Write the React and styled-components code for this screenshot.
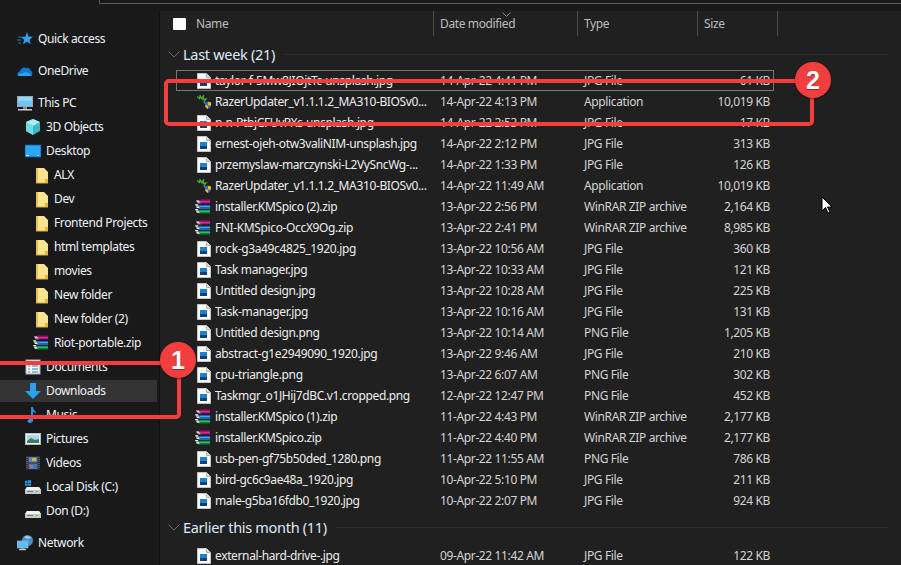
import styled, { createGlobalStyle } from "styled-components";

const GlobalStyle = createGlobalStyle`
  html, body {
    margin: 0;
    padding: 0;
    background: #191919;
  }
  * {
    box-sizing: border-box;
  }
`;

const Window = styled.div`
  position: relative;
  width: 901px;
  height: 565px;
  overflow: hidden;
  display: flex;
  flex-direction: column;
  background: #191919;
  color: #e8e8e8;
  font-family: "Noto Sans", "Liberation Sans", sans-serif;
  font-size: 12px;
  letter-spacing: -0.37px;
`;

const TopBar = styled.div`
  flex: 0 0 11px;
  padding-left: 99px;
`;

const AddressBox = styled.div`
  height: 4px;
  border-bottom: 1px solid #5a5a5a;
  border-left: 1px solid #5a5a5a;
`;

const Body = styled.div`
  flex: 1;
  display: flex;
  min-height: 0;
`;

const Sidebar = styled.nav`
  flex: 0 0 160px;
  padding-top: 16px;
  display: flex;
  flex-direction: column;
  gap: 8px;
  border-right: 1px solid #111;
`;

const NavGroup = styled.div`
  display: flex;
  flex-direction: column;
`;

const NavRow = styled.div`
  height: 22px;
  margin: 1px 0;
  width: 157px;
  display: flex;
  align-items: center;
  gap: 5px;
  padding-left: ${(p) => 17 + p.$level * 8}px;
  background: ${(p) => (p.$active ? "#333333" : "transparent")};
  white-space: nowrap;
  color: #eef3f8;
`;

const NavLabel = styled.span`
  margin-bottom: 2px;
`;

const Main = styled.main`
  flex: 1;
  background: #202020;
  min-width: 0;
`;

const HeaderBar = styled.div`
  position: relative;
  height: 25px;
  display: flex;
  padding-left: 13px;
  color: #bdbdbd;
`;

const Checkbox = styled.span`
  flex: 0 0 13px;
  height: 12px;
  margin: 7px 10px 0 0;
  background: #fff;
  border-radius: 1px;
`;

const HeaderCell = styled.div`
  width: ${(p) => p.$width}px;
  padding-top: 4px;
  padding-left: ${(p) => p.$pad || 0}px;
  border-right: 1px solid #4a4a4a;
`;

const SortChevron = styled.svg`
  position: absolute;
  left: 342px;
  top: 1px;
`;

const GroupTitle = styled.div`
  height: 22px;
  margin-top: ${(p) => p.$top}px;
  margin-bottom: ${(p) => 12 - p.$top}px;
  margin-left: 8px;
  display: flex;
  align-items: center;
  gap: 3px;
  font-size: 14.5px;
  letter-spacing: -0.3px;
  color: #dfeafa;
  white-space: nowrap;
`;

const GroupLine = styled.span`
  flex: 1;
  height: 1px;
  margin: 0 12px 0 6px;
  background: #2c2c2c;
`;

const FileRow = styled.div`
  width: 598px;
  height: 21px;
  margin-left: 16px;
  padding-left: 20px;
  display: grid;
  grid-template-columns: 18px 225px 144px 120px 66px;
  align-items: center;
  white-space: nowrap;
  border: 1px solid ${(p) => (p.$focused ? "#767676" : "transparent")};
  color: #d4d4d4;
`;

const IconCell = styled.span`
  display: flex;
  margin-left: ${(p) => p.$shift}px;
`;

const FileText = styled.span`
  margin-bottom: 1px;
`;

const FileName = styled(FileText)`
  color: #eeeeee;
`;

const FileSize = styled(FileText)`
  text-align: right;
`;

const Annotation = styled.div`
  position: absolute;
  left: ${(p) => p.$left}px;
  top: ${(p) => p.$top}px;
  width: ${(p) => p.$width}px;
  height: ${(p) => p.$height}px;
  border: 4px solid #f23e3e;
  border-radius: 5px;
`;

const Badge = styled.div`
  position: absolute;
  left: ${(p) => p.$left}px;
  top: ${(p) => p.$top}px;
  width: 36px;
  height: 36px;
  border-radius: 50%;
  background: #f23e3e;
  box-shadow: 0 1px 2px rgba(0, 0, 0, 0.45);
  color: #fff;
  display: flex;
  align-items: center;
  justify-content: center;
  font-family: "Liberation Sans", sans-serif;
  font-size: 25px;
  font-weight: 700;
  letter-spacing: 0;
  text-shadow: 0 1px 1px rgba(0, 0, 0, 0.4);
`;

const Pointer = styled.svg`
  position: absolute;
  left: 821px;
  top: 196px;
`;

const Icon = ({ w = 16, h = 16, vb = "0 0 16 16", children }) => (
  <svg width={w} height={h} viewBox={vb} style={{ flex: "none" }}>
    {children}
  </svg>
);

const StarIcon = () => (
  <Icon>
    <path d="M10 1l1.600 4.600 4.400.2-3.500 2.900 1.200 4.600L10 10.600l-4 2.700 1.200-4.600L4 6l4.500-.3z" fill="#2aa5f5" />
    <path d="M1 6h4M0 9h4M1 12h3" stroke="#1672c0" strokeWidth="1" />
  </Icon>
);

const CloudIcon = () => (
  <Icon>
    <path d="M1 13c-1.200-2-.3-4.400 2-4.800C4 5 7 3.500 9.500 5c2-.5 3.500.5 4 2.500 2 .5 2.500 4 1 5.500z" fill="#0f78d4" />
    <path d="M1 13c.5-2 3-3 5-2.500 2-2 6-1.500 8.500 2.500z" fill="#2ea1ec" />
  </Icon>
);

const MonitorIcon = () => (
  <Icon>
    <rect x="0.500" y="1.500" width="15" height="10" fill="#6cc4f8" stroke="#9aa8b4" />
    <rect x="1" y="2" width="14" height="4" fill="#8fd6fb" />
    <rect x="6" y="12" width="4" height="2" fill="#8a8f96" />
    <rect x="1" y="14" width="14" height="1.500" fill="#c8ccd0" />
  </Icon>
);

const CubeIcon = () => (
  <Icon>
    <path d="M8 0l7 3v9l-7 4-7-4V3z" fill="#3fb5c6" />
    <path d="M8 0l7 3-7 4-7-4z" fill="#a7eef2" />
    <path d="M1 3l7 4v9l-7-4z" fill="#6fdbe4" />
  </Icon>
);

const DesktopIcon = () => (
  <Icon>
    <rect x="0" y="2" width="16" height="12" fill="#1f9bf0" stroke="#0c66b4" strokeWidth="0.600" />
    <rect x="1" y="3" width="14" height="9" fill="#2aa8f6" />
    <rect x="1" y="12" width="3" height="1" fill="#d9eefc" />
    <rect x="12" y="12" width="2" height="1" fill="#d9eefc" />
  </Icon>
);

const FolderIcon = () => (
  <Icon h={17} vb="-2 0 16 17">
    <path d="M1 1h8l4 4v11H1z" fill="#fde48f" />
    <path d="M1 1h2v15H1z" fill="#edc04f" />
    <path d="M10 12h3v4h-3z" fill="#e5b53c" />
    <path d="M1 16h12" stroke="#dfae38" strokeWidth="1" />
  </Icon>
);

const ZipIcon = () => (
  <Icon w={16} h={16} vb="0 0 17 16">
    <path d="M2 1l4-1h10v4H5z" fill="#a00f6e" />
    <path d="M3 2h13v1H3z" fill="#ef3aa8" />
    <path d="M1 6h15v4H4z" fill="#1e63c4" />
    <path d="M3 7h13v1H3z" fill="#2fb5f0" />
    <path d="M1 11h15v4H4z" fill="#0f7a3a" />
    <path d="M3 12h13v1H3z" fill="#42d776" />
    <path d="M1 1h3L6 4H3zM0 5h3L5 9H2zM0 10h3l2 4H2z" fill="#f0f0f0" />
    <path d="M1 3h4M1 7h4M1 12h4" stroke="#222" strokeWidth="0.600" />
  </Icon>
);

const ImageFileIcon = () => (
  <Icon w={14} h={16} vb="0 0 14 16">
    <path d="M0.500 0.500h9l4 4v11h-13z" fill="#fbfbfb" stroke="#c4c4c4" />
    <path d="M9.500 0.500v4h4" fill="#d8d8d8" stroke="#b4b4b4" />
    <rect x="3" y="6" width="7" height="7" fill="#1f7fd1" />
    <rect x="3" y="10" width="7" height="3" fill="#123f7a" />
  </Icon>
);

const RazerIcon = () => (
  <Icon w={15} h={14} vb="0 0 15 14">
    <path d="M0 1.500l2.500 2L3 .5l1.500 3L6.500 1 6 4.500 9 4 7 6.500l1 2" fill="none" stroke="#45a83a" strokeWidth="1.300" />
    <path d="M8 7.500l2.800-1 3.200 1v3c0 1.500-1.500 2.500-3 3.500-1.500-1-3-2-3-3.500z" fill="#2a6fcf" />
    <path d="M11 6.700l3 .8v3h-3zM8 10.500h3V14c-1.500-1-3-2-3-3.500z" fill="#f2b71a" />
  </Icon>
);

const DocsIcon = () => (
  <Icon>
    <rect x="1" y="1" width="14" height="14" fill="#f5f7f9" stroke="#a8b0b8" />
    <rect x="2" y="2" width="12" height="2" fill="#3c8fd4" />
    <path d="M3 7h2M3 10h2M3 13h2M7 7h6M7 10h6M7 13h6" stroke="#2e7dbf" />
  </Icon>
);

const DownloadIcon = () => (
  <Icon>
    <path d="M5 0h6v8h5l-8 8-8-8h5z" fill="#2ba0ee" />
  </Icon>
);

const MusicIcon = () => (
  <Icon>
    <path d="M6 0h2c0 3 3 4 3 7-1-1.500-2-2-3-2v8.500c0 1.500-1.500 2.500-3 2.500s-2.500-1-2.500-2 1.500-2.500 3.500-2.500z" fill="#1b96ef" />
  </Icon>
);

const PicturesIcon = () => (
  <Icon>
    <rect x="0.500" y="2.500" width="15" height="11" fill="#f1f1f1" stroke="#bcbcbc" />
    <rect x="2" y="4" width="12" height="8" fill="#a8d2ee" />
    <path d="M2 10l4-3 4 2 4-1v4H2z" fill="#3d7c5e" />
  </Icon>
);

const VideosIcon = () => (
  <Icon>
    <rect x="1" y="1" width="14" height="14" fill="#2d2d2d" />
    <rect x="3.500" y="2" width="9" height="5.500" fill="#5e80c4" />
    <rect x="3.500" y="8.500" width="9" height="5.500" fill="#3c78c8" />
    <rect x="7" y="3" width="4" height="3" fill="#e0b040" />
    <rect x="5" y="10" width="3" height="3" fill="#d86a3a" />
    <path d="M2 2v12M14 2v12" stroke="#8a8a8a" strokeDasharray="1 1" />
  </Icon>
);

const DriveBody = () => (
  <>
    <path d="M2 8h12l2 3v4H0v-4z" fill="#c8c8c8" />
    <path d="M2 8h12l2 3H0z" fill="#f2f2f2" />
    <rect x="11" y="12" width="2" height="1" fill="#3fd04f" />
    <rect x="2" y="12" width="6" height="1" fill="#7a7a7a" />
  </>
);

const LocalDiskIcon = () => (
  <Icon>
    <DriveBody />
    <path d="M0 2l2.500-.5V4H0zM3 1.500L6 1v3H3zM0 4.500h2.500V7L0 6.500zM3 4.500h3V7L3 6.500z" fill="#18a0f0" />
  </Icon>
);

const DiskIcon = () => (
  <Icon>
    <DriveBody />
  </Icon>
);

const NetworkIcon = () => (
  <Icon>
    <circle cx="10.500" cy="5.500" r="5.500" fill="#4a90c8" />
    <path d="M7 2c3-2 6-1 7 1-2 1-5 1-7-1z" fill="#9fd0ea" />
    <rect x="0" y="6" width="11" height="7" fill="#58bdf6" stroke="#a0b4c4" strokeWidth="0.700" />
    <rect x="3.500" y="13" width="4" height="1" fill="#8a8f96" />
    <rect x="2" y="14" width="7" height="1.200" fill="#c4c8cc" />
  </Icon>
);

const NavItem = ({ level = 0, icon, label, active }) => (
  <NavRow $level={level} $active={active}>
    {icon}
    <NavLabel>{label}</NavLabel>
  </NavRow>
);

const quickAccess = ["ALX", "Dev", "Frontend Projects", "html templates", "movies", "New folder", "New folder (2)"];

const lastWeek = [
  ["img", "taylor-f-5Mw8JIOjtTc-unsplash.jpg", "14-Apr-22 4:41 PM", "JPG File", "61 KB"],
  ["exe", "RazerUpdater_v1.1.1.2_MA310-BIOSv0...", "14-Apr-22 4:13 PM", "Application", "10,019 KB"],
  ["img", "n-n-PtbjCFUvPXs-unsplash.jpg", "14-Apr-22 2:53 PM", "JPG File", "17 KB"],
  ["img", "ernest-ojeh-otw3valiNIM-unsplash.jpg", "14-Apr-22 2:12 PM", "JPG File", "313 KB"],
  ["img", "przemyslaw-marczynski-L2VySncWg-...", "14-Apr-22 1:33 PM", "JPG File", "126 KB"],
  ["exe", "RazerUpdater_v1.1.1.2_MA310-BIOSv0...", "14-Apr-22 11:49 AM", "Application", "10,019 KB"],
  ["zip", "installer.KMSpico (2).zip", "13-Apr-22 2:56 PM", "WinRAR ZIP archive", "2,164 KB"],
  ["zip", "FNI-KMSpico-OccX9Og.zip", "13-Apr-22 2:41 PM", "WinRAR ZIP archive", "8,985 KB"],
  ["img", "rock-g3a49c4825_1920.jpg", "13-Apr-22 10:56 AM", "JPG File", "360 KB"],
  ["img", "Task manager.jpg", "13-Apr-22 10:33 AM", "JPG File", "121 KB"],
  ["img", "Untitled design.jpg", "13-Apr-22 10:28 AM", "JPG File", "225 KB"],
  ["img", "Task-manager.jpg", "13-Apr-22 10:16 AM", "JPG File", "131 KB"],
  ["img", "Untitled design.png", "13-Apr-22 10:14 AM", "PNG File", "1,205 KB"],
  ["img", "abstract-g1e2949090_1920.jpg", "13-Apr-22 9:46 AM", "JPG File", "210 KB"],
  ["img", "cpu-triangle.png", "13-Apr-22 6:07 AM", "PNG File", "302 KB"],
  ["img", "Taskmgr_o1JHij7dBC.v1.cropped.png", "12-Apr-22 12:47 PM", "PNG File", "452 KB"],
  ["zip", "installer.KMSpico (1).zip", "11-Apr-22 4:43 PM", "WinRAR ZIP archive", "2,177 KB"],
  ["zip", "installer.KMSpico.zip", "11-Apr-22 4:40 PM", "WinRAR ZIP archive", "2,177 KB"],
  ["img", "usb-pen-gf75b50ded_1280.png", "11-Apr-22 11:55 AM", "PNG File", "786 KB"],
  ["img", "bird-gc6c9ae48a_1920.jpg", "10-Apr-22 5:10 PM", "JPG File", "211 KB"],
  ["img", "male-g5ba16fdb0_1920.jpg", "10-Apr-22 2:07 PM", "JPG File", "924 KB"],
];

const earlier = [["img", "external-hard-drive-.jpg", "09-Apr-22 11:42 AM", "JPG File", "122 KB"]];

const fileIcons = { img: <ImageFileIcon />, exe: <RazerIcon />, zip: <ZipIcon /> };

const Chevron = () => (
  <svg width="12" height="7" viewBox="0 0 12 7" style={{ flex: "none" }}>
    <path d="M.5.500L6 6 11.500.500" fill="none" stroke="#6a6a6a" />
  </svg>
);

const File = ({ row, focused }) => (
  <FileRow $focused={focused}>
    <IconCell $shift={row[0] === "zip" ? -2 : 0}>{fileIcons[row[0]]}</IconCell>
    <FileName>{row[1]}</FileName>
    <FileText>{row[2]}</FileText>
    <FileText>{row[3]}</FileText>
    <FileSize>{row[4]}</FileSize>
  </FileRow>
);

const App = () => (
  <Window>
    <GlobalStyle />
    <TopBar>
      <AddressBox />
    </TopBar>
    <Body>
      <Sidebar>
        <NavGroup>
          <NavItem icon={<StarIcon />} label="Quick access" />
        </NavGroup>
        <NavGroup>
          <NavItem icon={<CloudIcon />} label="OneDrive" />
        </NavGroup>
        <NavGroup>
          <NavItem icon={<MonitorIcon />} label="This PC" />
          <NavItem level={1} icon={<CubeIcon />} label="3D Objects" />
          <NavItem level={1} icon={<DesktopIcon />} label="Desktop" />
          {quickAccess.map((name) => (
            <NavItem key={name} level={2} icon={<FolderIcon />} label={name} />
          ))}
          <NavItem level={2} icon={<ZipIcon />} label="Riot-portable.zip" />
          <NavItem level={1} icon={<DocsIcon />} label="Documents" />
          <NavItem level={1} icon={<DownloadIcon />} label="Downloads" active />
          <NavItem level={1} icon={<MusicIcon />} label="Music" />
          <NavItem level={1} icon={<PicturesIcon />} label="Pictures" />
          <NavItem level={1} icon={<VideosIcon />} label="Videos" />
          <NavItem level={1} icon={<LocalDiskIcon />} label="Local Disk (C:)" />
          <NavItem level={1} icon={<DiskIcon />} label="Don (D:)" />
        </NavGroup>
        <NavGroup>
          <NavItem icon={<NetworkIcon />} label="Network" />
        </NavGroup>
      </Sidebar>
      <Main>
        <HeaderBar>
          <Checkbox />
          <HeaderCell $width={238}>Name</HeaderCell>
          <HeaderCell $width={144} $pad={6}>
            Date modified
          </HeaderCell>
          <HeaderCell $width={120} $pad={6}>
            Type
          </HeaderCell>
          <HeaderCell $width={80} $pad={6}>
            Size
          </HeaderCell>
          <SortChevron width="9" height="5" viewBox="0 0 9 5">
            <path d="M.5.500L4.500 4.500 8.500.500" fill="none" stroke="#8a8a8a" />
          </SortChevron>
        </HeaderBar>
        <GroupTitle $top={7}>
          <Chevron />
          <span>Last week (21)</span>
          <GroupLine />
        </GroupTitle>
        {lastWeek.map((row, i) => (
          <File key={row[1] + row[2]} row={row} focused={i === 0} />
        ))}
        <GroupTitle $top={5}>
          <Chevron />
          <span>Earlier this month (11)</span>
          <GroupLine />
        </GroupTitle>
        {earlier.map((row) => (
          <File key={row[1]} row={row} />
        ))}
      </Main>
    </Body>
    <Annotation $left={-10} $top={361} $width={191} $height={58} />
    <Annotation $left={164} $top={79} $width={650} $height={47} />
    <Badge $left={160} $top={342}>1</Badge>
    <Badge $left={795} $top={62}>2</Badge>
    <Pointer width="12" height="18" viewBox="0 0 12 18">
      <path d="M1 1v14l3.500-3.500L7 17l2-1-2.500-5H11z" fill="#fff" stroke="#000" strokeWidth="1" />
    </Pointer>
  </Window>
);

export default App;
